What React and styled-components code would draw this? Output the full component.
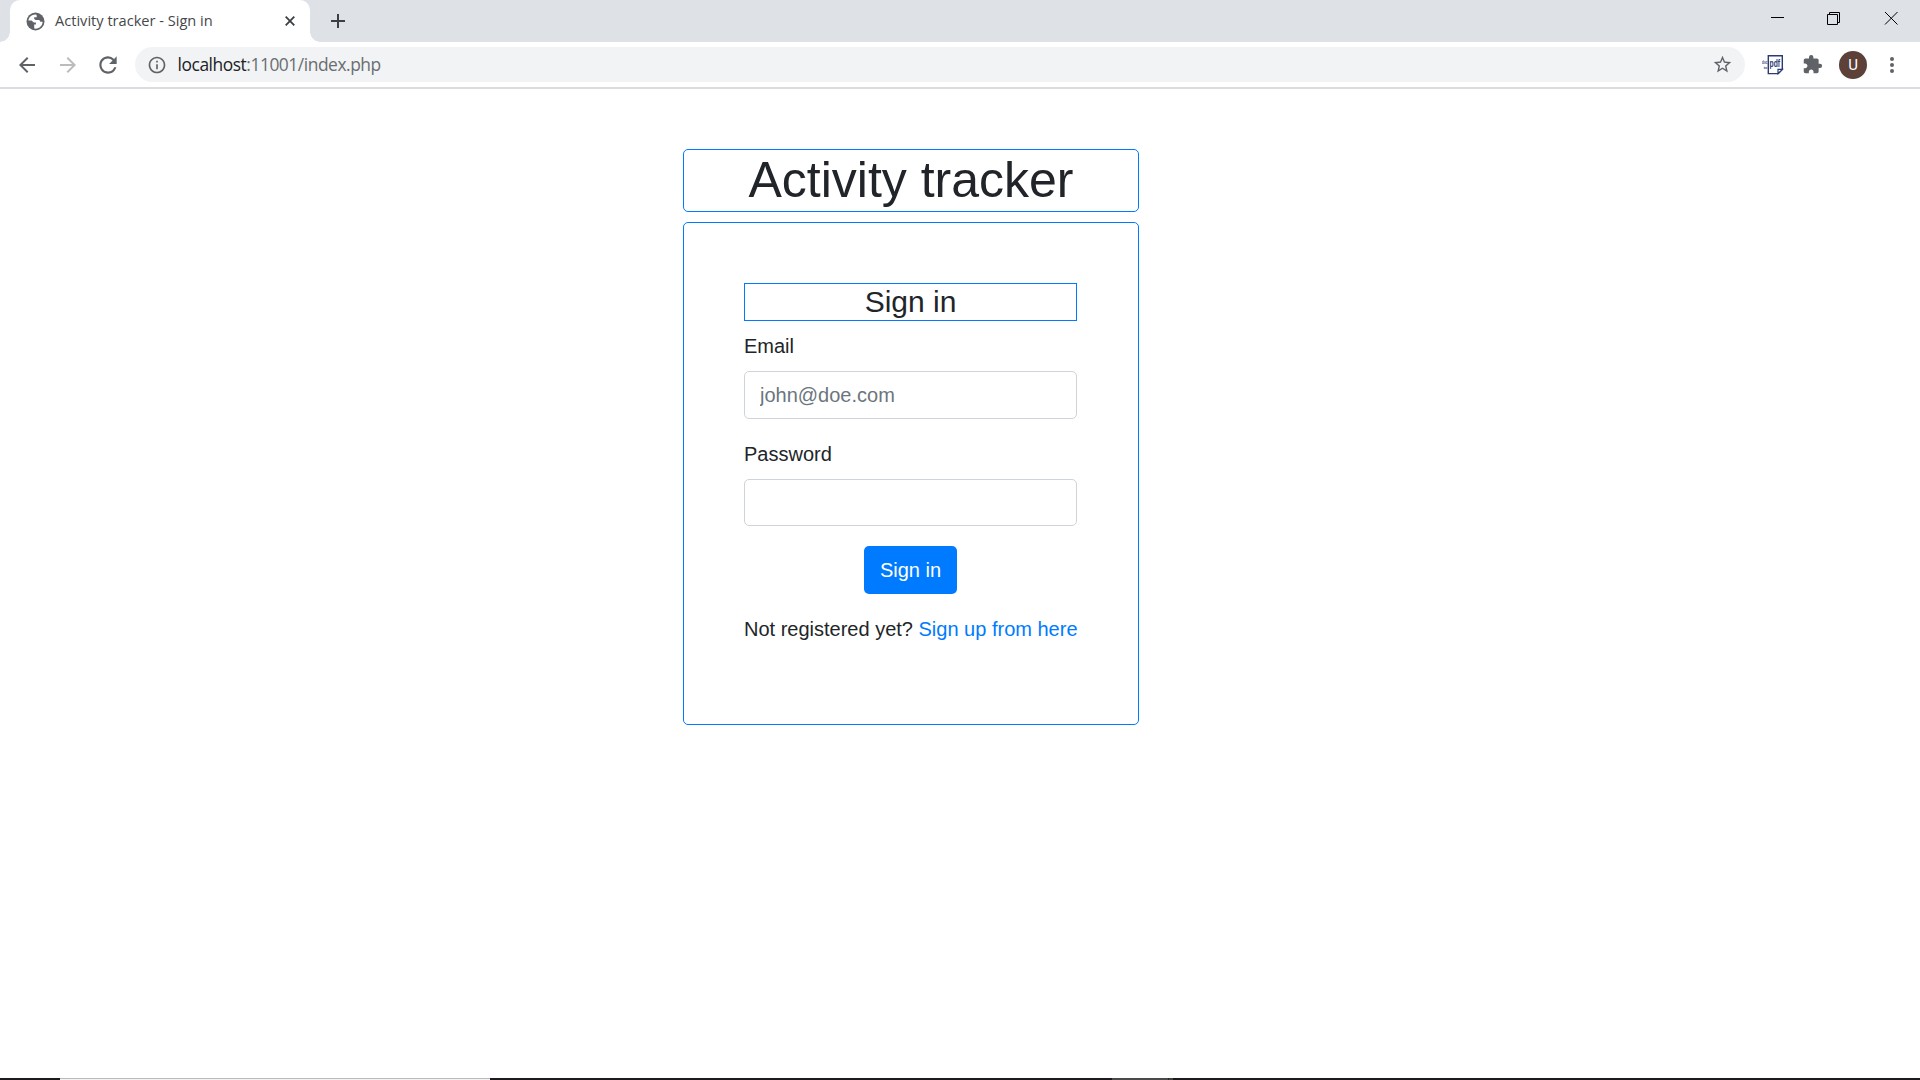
import React from "react";
import styled, { createGlobalStyle } from "styled-components";
import {
  MdArrowBack,
  MdArrowForward,
  MdRefresh,
  MdInfoOutline,
  MdStarBorder,
  MdExtension,
} from "react-icons/md";

const GlobalStyle = createGlobalStyle`
  *, *::before, *::after { box-sizing: border-box; }
  html, body { margin: 0; background: #fff; }
  body { overflow: hidden; }
`;

const uiFont = `"Open Sans", "Noto Sans", sans-serif`;
const pageFont = `"Liberation Sans", Arial, sans-serif`;

const Window = styled.div`
  display: flex;
  flex-direction: column;
  width: 1920px;
  height: 1080px;
  background: #fff;
`;

const TabStrip = styled.header`
  display: flex;
  flex: none;
  height: 42px;
  background: #dee1e6;
`;

const TabEdge = styled.span`
  width: 10px;
  height: 10px;
  align-self: flex-end;
  background: radial-gradient(
    circle at ${(p) => (p.$side === "left" ? "0 0" : "100% 0")},
    #dee1e6 9.5px,
    #fff 10px
  );
`;

const Tab = styled.div`
  display: flex;
  align-items: center;
  width: 300px;
  padding: 0 15px 0 16px;
  background: #fff;
  border-radius: 10px 10px 0 0;
`;

const TabTitle = styled.span`
  flex: 1;
  margin: 0 0 2px 10px;
  font: 14.6px/20px ${uiFont};
  color: #45474a;
  white-space: nowrap;
`;

const NewTab = styled.button`
  display: flex;
  padding: 0;
  margin: 13px 0 0 9.5px;
  width: 16px;
  height: 16px;
  border: 0;
  background: none;
`;

const WindowControls = styled.div`
  display: flex;
  gap: 42px;
  margin: 11px 21px 0 auto;
  height: 15px;
`;

const Toolbar = styled.nav`
  display: flex;
  align-items: center;
  flex: none;
  height: 47px;
  padding: 0 25px 0 15px;
  border-bottom: 2px solid #dadce0;
  color: #5f6368;
`;

const NavButtons = styled.div`
  display: flex;
  align-items: center;
  flex: none;
  width: 120px;
`;

const NavIcon = styled.span`
  display: flex;
  margin-left: ${(p) => p.$gap || 0}px;
  color: ${(p) => (p.$disabled ? "#babcbe" : "#5f6368")};
`;

const AddressBar = styled.div`
  display: flex;
  align-items: center;
  flex: 1;
  height: 35px;
  padding: 0 12px;
  border-radius: 18px;
  background: #f1f3f4;
`;

const Url = styled.span`
  flex: 1;
  margin: 0 0 1px 10.6px;
  font: 17.4px/24px ${uiFont};
  letter-spacing: -0.46px;
  color: #6a6d71;
  white-space: nowrap;
`;

const Host = styled.span`
  color: #202124;
`;

const Extensions = styled.div`
  display: flex;
  align-items: center;
  flex: none;
  margin-left: 17px;
`;

const Avatar = styled.span`
  display: flex;
  align-items: center;
  justify-content: center;
  width: 28px;
  height: 28px;
  margin: 0 22px 0 16px;
  border-radius: 50%;
  background: #5d4037;
  color: #fff;
  font: 15px/28px Roboto, sans-serif;
`;

const Page = styled.main`
  display: flex;
  flex-direction: column;
  align-items: center;
  flex: 1;
  width: 1822px;
  padding-top: 60px;
  font: 20px/30px ${pageFont};
  color: #212529;
`;

const Title = styled.h1`
  width: 456px;
  height: 63px;
  margin: 0 0 10px;
  border: 1px solid #007bff;
  border-radius: 5px;
  font-size: 50px;
  font-weight: 500;
  line-height: 60px;
  text-align: center;
`;

const Card = styled.form`
  display: flex;
  flex-direction: column;
  width: 456px;
  height: 503px;
  padding: 60px 61px 0 60px;
  border: 1px solid #007bff;
  border-radius: 5px;
`;

const CardHeading = styled.h4`
  height: 38px;
  margin: 0 0 10px;
  border: 1px solid #007bff;
  font-size: 30px;
  font-weight: 500;
  line-height: 36px;
  text-align: center;
`;

const Field = styled.div`
  display: flex;
  flex-direction: column;
  gap: 10px;
  margin-bottom: 20px;
`;

const Label = styled.label`
  height: 30px;
`;

const Input = styled.input`
  width: 333px;
  height: ${(p) => p.$height}px;
  padding: 0 15px;
  border: 1px solid #ced4da;
  border-radius: 5px;
  background: #fff;
  font: 20px/30px ${pageFont};
  outline: 0;
  &::placeholder { color: #6c757d; opacity: 1; }
`;

const Submit = styled.button`
  align-self: center;
  width: 93px;
  height: 48px;
  padding: 0;
  border: 0;
  border-radius: 5px;
  background: #007bff;
  color: #fff;
  font: 20px/30px ${pageFont};
`;

const Hint = styled.p`
  margin: 20px 0 0;
  white-space: nowrap;
`;

const SignUp = styled.a`
  color: #007bff;
  text-decoration: none;
`;

const Taskbar = styled.footer`
  display: flex;
  flex: none;
  height: 2px;
  background: #1c1a1c;
`;

const Segment = styled.span`
  width: ${(p) => p.$width}px;
  background: ${(p) => p.$fill || "transparent"};
`;

const Globe = () => (
  <svg width="19" height="19" viewBox="0 0 19 19">
    <circle cx="9.5" cy="9.5" r="9" fill="#5f6368" />
    <path
      d="M9.3 2.4C5.7 2.5 3 4.9 2.4 8.4h3.1l2.3 2.1h2.1v2.1H8.2v3.9c4.6.9 8.4-2.5 8.4-6.7h-2.2l-1.1-1.7H9.7L8.2 6.9V5.2h2.5V3.5c0-.6-.6-1.1-1.4-1.1z"
      fill="#fff"
    />
  </svg>
);

const TabClose = () => (
  <svg width="10" height="10" viewBox="0 0 10 10" stroke="#3c4043" strokeWidth="1.8">
    <path d="M.7.7l8.6 8.6M9.3.7L.7 9.3" />
  </svg>
);

const PdfIcon = () => (
  <svg width="22" height="20" viewBox="0 0 22 20">
    <path d="M6.3.8h14v13.4l-4 4.4h-10z" fill="#fff" stroke="#2c3a75" strokeWidth="1.4" />
    <path d="M16 18.6v-4.2h4.4z" fill="#fff" stroke="#2c3a75" strokeWidth="1.2" />
    <text x="7.6" y="12" fontFamily="Liberation Sans, sans-serif" fontWeight="700" fontSize="10" textLength="10.5" lengthAdjust="spacingAndGlyphs" fill="#2c3a75">pdf</text>
    <text x="0.1" y="9.4" fontFamily="Liberation Sans, sans-serif" fontWeight="700" fontSize="4.5" textLength="5.2" lengthAdjust="spacingAndGlyphs" fill="#2c3a75">doc</text>
    <text x="1.8" y="13.6" fontFamily="Liberation Sans, sans-serif" fontWeight="700" fontSize="4.2" textLength="3.4" lengthAdjust="spacingAndGlyphs" fill="#2c3a75">to</text>
  </svg>
);

export default function App() {
  return (
    <Window>
      <GlobalStyle />
      <TabStrip>
        <TabEdge $side="left" />
        <Tab>
          <Globe />
          <TabTitle>Activity tracker - Sign in</TabTitle>
          <TabClose />
        </Tab>
        <TabEdge $side="right" />
        <NewTab aria-label="New tab">
          <svg width="16" height="16" viewBox="0 0 16 16" stroke="#3c4043" strokeWidth="2">
            <path d="M8 1v14M1 8h14" />
          </svg>
        </NewTab>
        <WindowControls>
          <svg width="15" height="15" viewBox="0 0 15 15" stroke="#000">
            <path d="M1 6.5h13" />
          </svg>
          <svg width="15" height="15" viewBox="0 0 15 15" fill="none" stroke="#000">
            <path d="M.5 3.5h10v10H.5zM2.5 3.5v-2h10v10h-2" />
          </svg>
          <svg width="15" height="15" viewBox="0 0 15 15" stroke="#000">
            <path d="M1 1l12.5 12.5M13.5 1L1 13.5" />
          </svg>
        </WindowControls>
      </TabStrip>

      <Toolbar>
        <NavButtons>
          <NavIcon><MdArrowBack size={24} /></NavIcon>
          <NavIcon $gap={17} $disabled><MdArrowForward size={24} /></NavIcon>
          <NavIcon $gap={15}><MdRefresh size={26} /></NavIcon>
        </NavButtons>
        <AddressBar>
          <MdInfoOutline size={20} />
          <Url><Host>localhost</Host>:11001/index.php</Url>
          <MdStarBorder size={21} />
        </AddressBar>
        <Extensions>
          <PdfIcon />
          <NavIcon $gap={18}><MdExtension size={21} /></NavIcon>
          <Avatar>U</Avatar>
          <svg width="6" height="18" viewBox="0 0 6 18" fill="#5f6368">
            <circle cx="3" cy="3" r="2" />
            <circle cx="3" cy="9" r="2" />
            <circle cx="3" cy="15" r="2" />
          </svg>
        </Extensions>
      </Toolbar>

      <Page>
        <Title>Activity tracker</Title>
        <Card>
          <CardHeading>Sign in</CardHeading>
          <Field>
            <Label htmlFor="email">Email</Label>
            <Input id="email" type="email" placeholder="john@doe.com" $height={48} />
          </Field>
          <Field>
            <Label htmlFor="password">Password</Label>
            <Input id="password" type="password" $height={47} />
          </Field>
          <Submit type="button">Sign in</Submit>
          <Hint>
            Not registered yet? <SignUp>Sign up from here</SignUp>
          </Hint>
        </Card>
      </Page>

      <Taskbar>
        <Segment $width={60} />
        <Segment $width={430} $fill="linear-gradient(#bababa 50%, #f3f3f3 50%)" />
        <Segment $width={622} />
        <Segment $width={56} $fill="#4b4a4b" />
        <Segment $width={1} $fill="#2a292a" />
        <Segment $width={4} $fill="#444344" />
      </Taskbar>
    </Window>
  );
}
